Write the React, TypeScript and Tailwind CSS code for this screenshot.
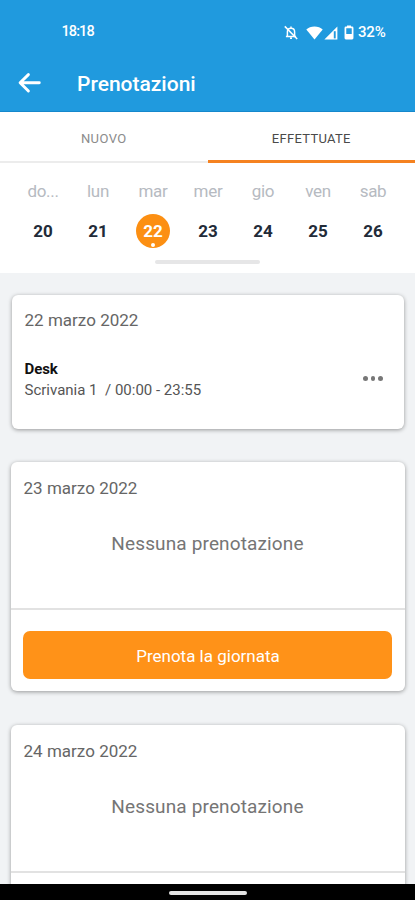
import React from 'react';

interface Day {
  label: string;
  date: number;
  selected?: boolean;
}

interface Booking {
  id: string;
  date: string;
  showAction: boolean;
}

const days: Day[] = [
  { label: 'do...', date: 20 },
  { label: 'lun', date: 21 },
  { label: 'mar', date: 22, selected: true },
  { label: 'mer', date: 23 },
  { label: 'gio', date: 24 },
  { label: 'ven', date: 25 },
  { label: 'sab', date: 26 },
];

const emptyDays: Booking[] = [
  { id: '23', date: '23 marzo 2022', showAction: true },
  { id: '24', date: '24 marzo 2022', showAction: false },
];

// --- Status bar ---
const StatusBar: React.FC = () => (
  <div className="flex h-[65px] items-center justify-between pl-[61.5px] pr-[29.5px] text-[15px] font-medium leading-none">
    <span className="text-[14.5px] tracking-[-0.9px]">18:18</span>
    <div className="flex items-center">
      {/* muted bell */}
      <svg width="14" height="15" viewBox="0 0 14 15" fill="none" stroke="currentColor" strokeWidth="1.5">
        <path d="M3.4 11.3V6.8C3.4 4.6 4.9 3.2 7 3.2s3.6 1.4 3.6 3.6v4.5M1.9 11.4h10.2M7 3.2V1.4M6 13.2h2" />
        <path d="M.8 1.4 13.2 14" />
      </svg>
      <svg className="ml-[8px]" width="17" height="14" viewBox="0 0 17 14" fill="currentColor">
        <path d="M8.5 13.6.3 3.4C2.4 1.5 5.2.4 8.5.4s6.1 1.1 8.2 3z" />
      </svg>
      {/* signal */}
      <svg className="ml-px" width="14" height="14" viewBox="0 0 14 14">
        <path d="M13.4.6V13.6H.4z" fill="currentColor" />
        <path d="M9.8 5.2h1.9v7.2H9.8z" fill="#209ade" />
      </svg>
      {/* battery */}
      <svg className="ml-[6px]" width="10" height="15" viewBox="0 0 10 15">
        <path d="M3 .5h4v1.6H3z" fill="currentColor" />
        <rect x="1.4" y="2.4" width="7.2" height="11.2" rx=".5" fill="none" stroke="currentColor" strokeWidth="1.7" />
        <path d="M1.4 9h7.2v4.6H1.4z" fill="currentColor" />
      </svg>
      <span className="ml-[4px] tracking-[-0.2px]">32%</span>
    </div>
  </div>
);

const Header: React.FC = () => (
  <header className="h-[112px] shrink-0 border-b border-[#1588cc] bg-[#209ade] text-white">
    <StatusBar />
    <div className="flex h-9 items-center pl-[18px]">
      <svg width="24" height="22" viewBox="0 0 24 22" fill="none" stroke="currentColor" strokeWidth="2.9" strokeLinecap="round" strokeLinejoin="round">
        <path d="M21.3 10.8H2.3M10.4 2.6 2.1 10.8l8.3 8.2" />
      </svg>
      <h1 className="ml-[35px] pt-[2px] text-[21px] font-medium leading-none">Prenotazioni</h1>
    </div>
  </header>
);

const Tabs: React.FC = () => (
  <div className="flex h-[51px] shrink-0 text-[13px] leading-none">
    <div className="flex flex-1 items-center justify-center border-b-2 border-[#ececec] pt-[3px] tracking-[0.4px] text-[#8b8b8b]">NUOVO</div>
    <div className="flex flex-1 items-center justify-center border-b-[3px] border-[#f58220] pt-[4px] tracking-[0.3px] text-[#4a4a4a]">EFFETTUATE</div>
  </div>
);

const WeekStrip: React.FC = () => (
  <div className="flex h-[110px] shrink-0 flex-col items-center bg-white pt-[17px]">
    <div className="flex pl-px">
      {days.map(day => (
        <div key={day.date} className="flex w-[55px] flex-col items-center">
          <span className="h-[22px] text-[17px] leading-[22px] tracking-[-0.3px] text-[#b6bac1]">{day.label}</span>
          {day.selected ? (
            <div className="relative mt-[12px] flex h-[34px] w-[34px] items-center justify-center rounded-full bg-[#fc8f12] pt-[2px] text-[17px] font-bold text-white">
              {day.date}
              <span className="absolute bottom-px left-[15px] h-[4px] w-[4px] rounded-full bg-white" />
            </div>
          ) : (
            <div className="mt-[12px] flex h-[34px] items-center pt-[2px] text-[17px] font-bold text-[#222b38]">{day.date}</div>
          )}
        </div>
      ))}
    </div>
    <div className="mt-[12px] h-[4px] w-[105px] rounded-xs bg-[#e6e6e7]" />
  </div>
);

const BookedCard: React.FC = () => (
  <div className="mx-auto h-[134px] w-[392px] shrink-0 rounded-[6px] bg-white pl-[13px] pr-[21px] pt-[15px] shadow-[0_1px_4px_rgba(0,0,0,0.38)]">
    <p className="text-[17px] leading-[20px] tracking-[0.02px] text-[#666]">22 marzo 2022</p>
    <div className="mt-[29px] flex items-center justify-between">
      <div>
        <p className="text-[15px] font-bold leading-[20px] tracking-[-0.1px] text-[#111]">Desk</p>
        <p className="whitespace-pre pt-px text-[15px] leading-[20px] text-[#555]">{'Scrivania 1  / 00:00 - 23:55'}</p>
      </div>
      <div className="flex gap-[3px] pb-[2px]">
        <span className="h-[4.5px] w-[4.5px] rounded-full bg-[#777]" />
        <span className="h-[4.5px] w-[4.5px] rounded-full bg-[#777]" />
        <span className="h-[4.5px] w-[4.5px] rounded-full bg-[#777]" />
      </div>
    </div>
  </div>
);

const EmptyCard: React.FC<Booking> = ({ date, showAction }) => (
  <div className="mx-auto h-[229px] w-[394px] shrink-0 rounded-[6px] bg-white shadow-[0_1px_4px_rgba(0,0,0,0.38)]">
    <div className="h-[148px] border-b-2 border-[#e2e2e2] px-[13px] pt-[16px]">
      <p className="text-[17px] leading-[20px] tracking-[0.02px] text-[#666]">{date}</p>
      <p className="mt-[34px] text-center text-[19px] leading-[24px] tracking-[0.14px] text-[#757575]">Nessuna prenotazione</p>
    </div>
    {showAction && (
      <div className="px-[12.5px] pt-[21px]">
        <button className="h-[48px] w-full rounded-[7px] bg-[#ff9218] pl-px pt-[3px] text-[17px] text-white">Prenota la giornata</button>
      </div>
    )}
  </div>
);

const App: React.FC = () => {
  return (
    <div className="flex h-[900px] w-[415px] flex-col overflow-hidden bg-white font-['Roboto',sans-serif]">
      <Header />
      <Tabs />
      <WeekStrip />
      <main className="flex min-h-0 flex-1 flex-col overflow-hidden bg-[#f1f3f5] pt-[22px]">
        <BookedCard />
        <div className="mt-[33px] flex shrink-0 flex-col gap-[34px]">
          {emptyDays.map(day => (
            <EmptyCard key={day.id} {...day} />
          ))}
        </div>
      </main>
      <div className="flex h-[16px] shrink-0 items-center justify-center bg-black pt-[2px]">
        <div className="h-[4px] w-[78px] rounded-full bg-[#e4e4e4]" />
      </div>
    </div>
  );
};

export default App;
